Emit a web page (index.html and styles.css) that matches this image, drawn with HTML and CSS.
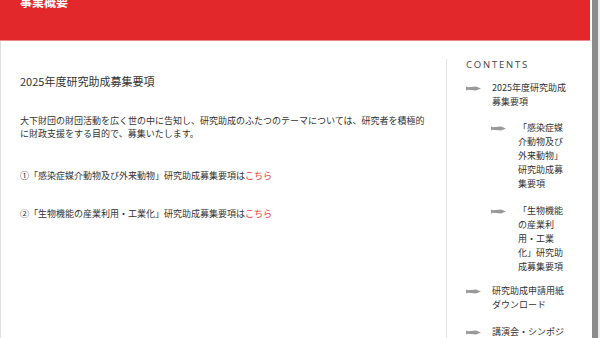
FILE: index.html
```html
<!DOCTYPE html>
<html lang="ja">
<head>
    <meta charset="UTF-8">
    <meta name="viewport" content="width=device-width, initial-scale=1.0">
    <title>事業概要</title>
    <link rel="stylesheet" href="styles.css">
</head>
<body>
    <div class="page">
        <!-- Page Header -->
        <header class="page-header">
            <h1 class="page-title">事業概要</h1>
        </header>

        <div class="page-body">
            <!-- Main Column -->
            <main class="main">
                <h2 class="entry-title">2025年度研究助成募集要項</h2>
                <p class="lead">大下財団の財団活動を広く世の中に告知し、研究助成のふたつのテーマについては、研究者を積極的に財政支援をする目的で、募集いたします。</p>
                <p class="item item-first">①「感染症媒介動物及び外来動物」研究助成募集要項は<a href="#">こちら</a></p>
                <p class="item">②「生物機能の産業利用・工業化」研究助成募集要項は<a href="#">こちら</a></p>
            </main>

            <!-- Sidebar Contents -->
            <aside class="side">
                <div class="side-title">CONTENTS</div>
                <ul class="toc">
                    <li class="has-sub">
                        <svg class="arrow" viewBox="0 0 15 5"><polygon points="0,0.5 2,1.2 10,0.5 15,2.5 10,4.5 2,3.8 0,4.5"/></svg>
                        <div class="toc-text">
                            2025年度研究助成募集要項
                            <ul class="toc sub">
                                <li>
                                    <svg class="arrow" viewBox="0 0 15 5"><polygon points="0,0.5 2,1.2 10,0.5 15,2.5 10,4.5 2,3.8 0,4.5"/></svg>
                                    <div class="toc-text">「感染症媒介動物及び外来動物」研究助成募集要項</div>
                                </li>
                                <li>
                                    <svg class="arrow" viewBox="0 0 15 5"><polygon points="0,0.5 2,1.2 10,0.5 15,2.5 10,4.5 2,3.8 0,4.5"/></svg>
                                    <div class="toc-text">「生物機能の産業利用・工業化」研究助成募集要項</div>
                                </li>
                            </ul>
                        </div>
                    </li>
                    <li>
                        <svg class="arrow" viewBox="0 0 15 5"><polygon points="0,0.5 2,1.2 10,0.5 15,2.5 10,4.5 2,3.8 0,4.5"/></svg>
                        <div class="toc-text">研究助成申請用紙ダウンロード</div>
                    </li>
                    <li>
                        <svg class="arrow" viewBox="0 0 15 5"><polygon points="0,0.5 2,1.2 10,0.5 15,2.5 10,4.5 2,3.8 0,4.5"/></svg>
                        <div class="toc-text">講演会・シンポジウム</div>
                    </li>
                </ul>
            </aside>
        </div>
    </div>
    <div class="page-gap"></div>
    <div class="rail"></div>
</body>
</html>
```

FILE: styles.css
```css
html, body {
    height: 100%;
}

body {
    margin: 0;
    padding: 0;
    display: flex;
    overflow: hidden;
    background-color: #eeeeee;
    font-family: "Noto Sans CJK JP", "Noto Sans", sans-serif;
    color: #333;
}

/* Page */
.page {
    width: 590px;
    flex: none;
    background-color: #fff;
}

.page-gap {
    width: 2px;
    flex: none;
    background-color: #fff;
}

.rail {
    width: 6px;
    flex: none;
    background-color: #8c8c8c;
}

/* Header */
.page-header {
    height: 40px;
    background-color: #e2282b;
    border-bottom: 1px solid #ee8a8c;
    padding-left: 20px;
    overflow: hidden;
}

.page-title {
    margin: -5px 0 0;
    font-size: 12px;
    line-height: 14px;
    font-weight: bold;
    color: #fff;
}

/* Body */
.page-body {
    display: flex;
    height: 297px;
}

.main {
    width: 426px;
    flex: none;
    padding: 33px 0 0 19px;
    border-left: 1px solid #dedede;
}

.entry-title {
    margin: 0;
    font-size: 11px;
    line-height: 14px;
    font-weight: normal;
    color: #333;
}

.lead {
    margin: 26px 0 0;
    font-size: 9px;
    line-height: 13px;
    width: 412px;
}

.item {
    margin: 25px 0 0;
    font-size: 9px;
    line-height: 13px;
}

.item-first {
    margin-top: 29px;
}

.item a {
    color: #e8383d;
    text-decoration: none;
}

/* Sidebar */
.side {
    flex: 1;
    margin-top: 18px;
    padding: 0 20px 0 19px;
    border-left: 1px solid #e3e3e3;
}

.side-title {
    font-family: "Open Sans", "Noto Sans", sans-serif;
    font-size: 9.5px;
    line-height: 12px;
    letter-spacing: 1.8px;
    color: #444;
}

.toc {
    list-style: none;
    margin: 10px 0 0;
    padding: 0;
}

.toc li {
    display: flex;
    align-items: flex-start;
    gap: 11px;
    margin-bottom: 13px;
}

.toc li.has-sub {
    margin-bottom: 10px;
}

.toc-text {
    font-size: 9px;
    line-height: 14px;
    color: #333;
    min-width: 0;
}

.arrow {
    width: 15px;
    height: 5px;
    flex: none;
    margin-top: 5px;
    fill: #999;
}

.toc.sub {
    margin: 12px 0 0 -1px;
}

.toc.sub li {
    gap: 12px;
    margin-bottom: 13px;
}

.toc.sub li:last-child {
    margin-bottom: 0;
}

.toc.sub .toc-text {
    width: 47px;
}
```
